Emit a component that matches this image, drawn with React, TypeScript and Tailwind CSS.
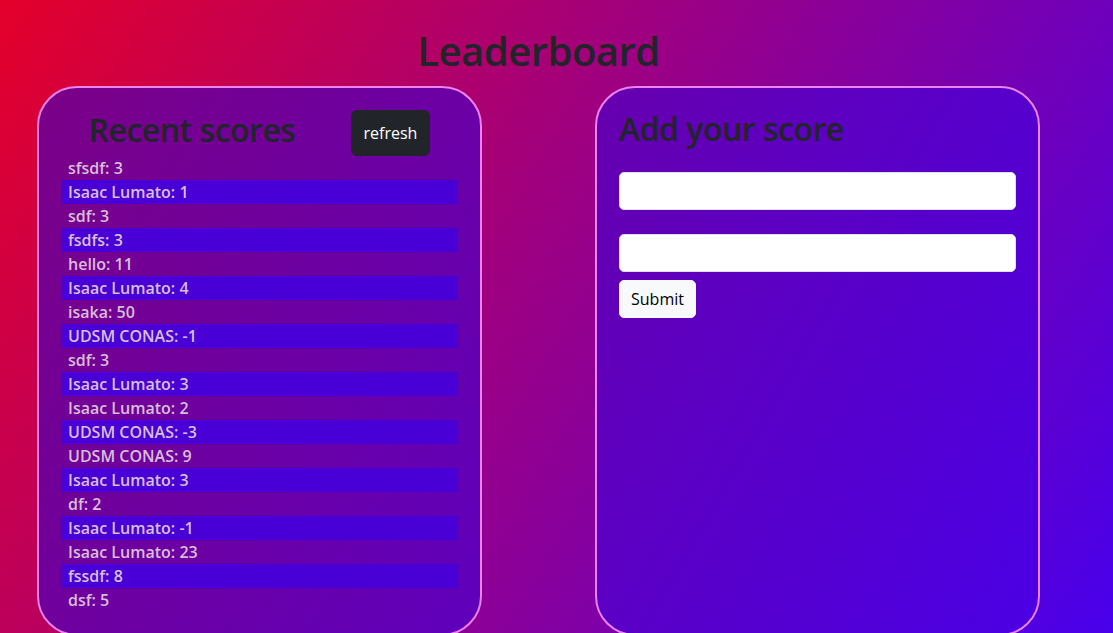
import React from 'react';

const scores = [
  'sfsdf: 3',
  'Isaac Lumato: 1',
  'sdf: 3',
  'fsdfs: 3',
  'hello: 11',
  'Isaac Lumato: 4',
  'isaka: 50',
  'UDSM CONAS: -1',
  'sdf: 3',
  'Isaac Lumato: 3',
  'Isaac Lumato: 2',
  'UDSM CONAS: -3',
  'UDSM CONAS: 9',
  'Isaac Lumato: 3',
  'df: 2',
  'Isaac Lumato: -1',
  'Isaac Lumato: 23',
  'fssdf: 8',
  'dsf: 5',
];

function App() {
  return (
    <div className="min-h-screen bg-fixed bg-linear-120/srgb from-[#e4002a] to-[#4800ec] font-['Open_Sans',sans-serif] text-[#212529]">
      <div className="w-[1040px] pl-[37px] pt-[27px]">
        <h1 className="text-center text-[40px] leading-[1.2] font-semibold tracking-[-0.5px] mb-[11px]">Leaderboard</h1>

        <div className="flex justify-between items-stretch">
          {/* recent scores */}
          <section className="w-[445px] rounded-[40px] border-2 border-[#ee82ee] bg-fixed bg-linear-120/srgb from-[#7e0080] to-[#4800ea] p-[22px]">
            <div className="flex justify-around items-center h-[46px]">
              <h2 className="text-[32px] leading-[1.2] font-semibold tracking-[-0.5px] mb-[6px]">Recent scores</h2>
              <button className="bg-[#212529] text-white text-[16px] leading-[24px] px-[12px] py-[10px] rounded-md border border-[#212529]">
                refresh
              </button>
            </div>
            <ul>
              {scores.map((s, i) => (
                <li
                  key={i}
                  className={`h-[24px] leading-[24px] pl-[7px] text-[16px] font-semibold text-[#d8bfd8] ${
                    i % 2 === 1 ? 'bg-[#4800d6]' : ''
                  }`}
                >
                  {s}
                </li>
              ))}
            </ul>
          </section>

          {/* add score */}
          <section className="w-[445px] rounded-[40px] border-2 border-[#ee82ee] bg-fixed bg-linear-120/srgb from-[#7e0080] to-[#4800ea] px-[22px] pt-[22px]">
            <h2 className="text-[32px] leading-[1.2] font-semibold tracking-[-0.5px]">Add your score</h2>
            <form className="mt-[24px]" onSubmit={(e) => e.preventDefault()}>
              <input
                type="text"
                className="block w-full h-[38px] bg-white border border-[#dee2e6] rounded-[5px] px-3 mb-[24px] outline-none"
              />
              <input
                type="number"
                className="block w-full h-[38px] bg-white border border-[#dee2e6] rounded-[5px] px-3 mb-[8px] outline-none"
              />
              <button
                type="submit"
                className="bg-[#f8f9fa] text-black text-[16px] leading-[24px] px-[11px] py-[6px] rounded-[5px] border border-[#f8f9fa]"
              >
                Submit
              </button>
            </form>
          </section>
        </div>
      </div>
    </div>
  );
}

export default App;
